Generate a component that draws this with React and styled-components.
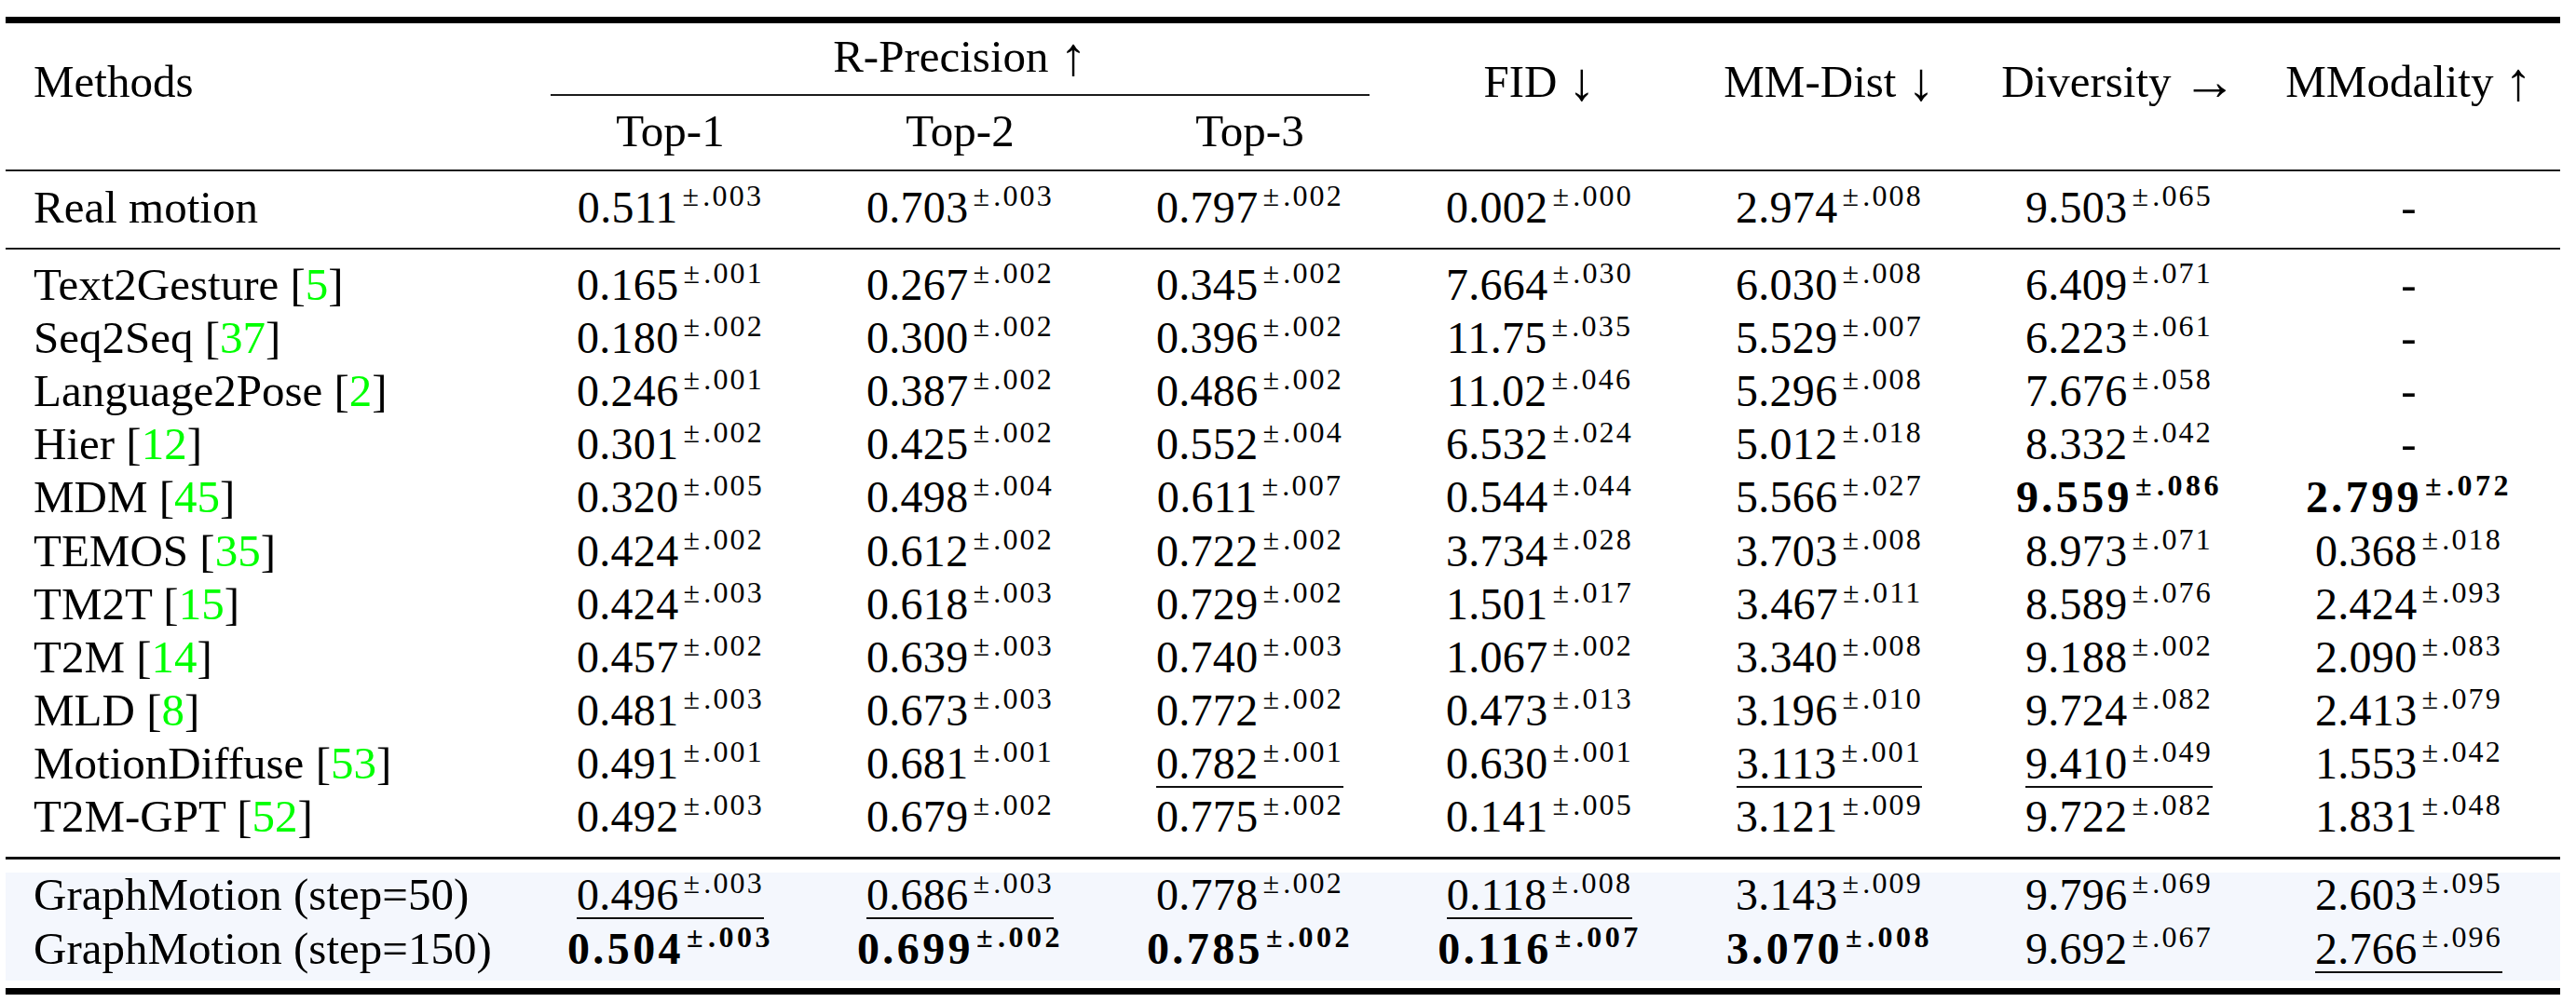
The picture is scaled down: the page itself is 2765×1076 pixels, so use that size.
import React from "react";
import styled, { createGlobalStyle } from "styled-components";

const COLS = "558px repeat(7, 311px)";

const rows = [
  { name: "Text2Gesture", cite: 5, vals: ["0.165/.001", "0.267/.002", "0.345/.002", "7.664/.030", "6.030/.008", "6.409/.071", "-"] },
  { name: "Seq2Seq", cite: 37, vals: ["0.180/.002", "0.300/.002", "0.396/.002", "11.75/.035", "5.529/.007", "6.223/.061", "-"] },
  { name: "Language2Pose", cite: 2, vals: ["0.246/.001", "0.387/.002", "0.486/.002", "11.02/.046", "5.296/.008", "7.676/.058", "-"] },
  { name: "Hier", cite: 12, vals: ["0.301/.002", "0.425/.002", "0.552/.004", "6.532/.024", "5.012/.018", "8.332/.042", "-"] },
  { name: "MDM", cite: 45, vals: ["0.320/.005", "0.498/.004", "0.611/.007", "0.544/.044", "5.566/.027", "*9.559/.086", "*2.799/.072"] },
  { name: "TEMOS", cite: 35, vals: ["0.424/.002", "0.612/.002", "0.722/.002", "3.734/.028", "3.703/.008", "8.973/.071", "0.368/.018"] },
  { name: "TM2T", cite: 15, vals: ["0.424/.003", "0.618/.003", "0.729/.002", "1.501/.017", "3.467/.011", "8.589/.076", "2.424/.093"] },
  { name: "T2M", cite: 14, vals: ["0.457/.002", "0.639/.003", "0.740/.003", "1.067/.002", "3.340/.008", "9.188/.002", "2.090/.083"] },
  { name: "MLD", cite: 8, vals: ["0.481/.003", "0.673/.003", "0.772/.002", "0.473/.013", "3.196/.010", "9.724/.082", "2.413/.079"] },
  { name: "MotionDiffuse", cite: 53, vals: ["0.491/.001", "0.681/.001", "_0.782/.001", "0.630/.001", "_3.113/.001", "_9.410/.049", "1.553/.042"] },
  { name: "T2M-GPT", cite: 52, vals: ["0.492/.003", "0.679/.002", "0.775/.002", "0.141/.005", "3.121/.009", "9.722/.082", "1.831/.048"] },
];

const realMotion = ["0.511/.003", "0.703/.003", "0.797/.002", "0.002/.000", "2.974/.008", "9.503/.065", "-"];

const ours = [
  { name: "GraphMotion (step=50)", vals: ["_0.496/.003", "_0.686/.003", "0.778/.002", "_0.118/.008", "3.143/.009", "9.796/.069", "2.603/.095"] },
  { name: "GraphMotion (step=150)", vals: ["*0.504/.003", "*0.699/.002", "*0.785/.002", "*0.116/.007", "*3.070/.008", "9.692/.067", "_2.766/.096"] },
];

const Value = ({ v }) => {
  if (v === "-") return <span>-</span>;
  const bold = v[0] === "*";
  const under = v[0] === "_";
  const [n, s] = v.replace(/^[*_]/, "").split("/");
  return (
    <Num $bold={bold} $under={under}>
      {n}
      <Pm $bold={bold}>
        <PmSign>±</PmSign>
        {s}
      </Pm>
    </Num>
  );
};

const Method = ({ name, cite }) => (
  <MethodCell>
    {name}
    {cite !== undefined && (
      <>
        {" "}[<Cite>{cite}</Cite>]
      </>
    )}
  </MethodCell>
);

const DataRow = ({ name, cite, vals, $tight }) => (
  <Row $tight={$tight}>
    <Method name={name} cite={cite} />
    {vals.map((v, i) => (
      <DataCell key={i}>
        <Value v={v} />
      </DataCell>
    ))}
  </Row>
);

export default function App() {
  return (
    <Page>
      <GlobalStyle />
      <Table>
        <Rule $h={7} />
        <Head>
          <HeadCell $col="1" $row="1 / 4" $top>
            Methods
          </HeadCell>
          <HeadCell $col="2 / 5" $row="1" $center>
            R-Precision <Arrow>↑</Arrow>
          </HeadCell>
          <CMidRule />
          <HeadCell $col="2" $row="3" $center>Top-1</HeadCell>
          <HeadCell $col="3" $row="3" $center>Top-2</HeadCell>
          <HeadCell $col="4" $row="3" $center>Top-3</HeadCell>
          <HeadCell $col="5" $row="1 / 4" $top $center>
            FID <Arrow>↓</Arrow>
          </HeadCell>
          <HeadCell $col="6" $row="1 / 4" $top $center>
            MM-Dist <Arrow>↓</Arrow>
          </HeadCell>
          <HeadCell $col="7" $row="1 / 4" $top $center>
            Diversity <Arrow>→</Arrow>
          </HeadCell>
          <HeadCell $col="8" $row="1 / 4" $top $center>
            MModality <Arrow>↑</Arrow>
          </HeadCell>
        </Head>
        <Rule $h={2} $color="#1b1b1b" />
        <RealSection>
          <DataRow name="Real motion" vals={realMotion} />
        </RealSection>
        <Rule $h={2} $color="#1b1b1b" />
        <Body>
          {rows.map((r) => (
            <DataRow key={r.name} {...r} />
          ))}
        </Body>
        <Rule $h={3} $color="#111" />
        <Highlight>
          {ours.map((r) => (
            <DataRow key={r.name} {...r} $tight />
          ))}
        </Highlight>
        <Rule $h={7} />
      </Table>
    </Page>
  );
}

// styles
const GlobalStyle = createGlobalStyle`
  html, body {
    margin: 0;
    padding: 0;
    background: #fff;
  }
  body {
    font-family: "Liberation Serif", "Times New Roman", serif;
    color: #000;
  }
`;

const Page = styled.div`
  padding: 18px 0 0 6px;
`;

const Table = styled.div`
  width: 2742px;
  font-size: 49px;
`;

const Rule = styled.div`
  height: ${(p) => p.$h}px;
  background: ${(p) => p.$color || "#000"};
`;

const Head = styled.div`
  display: grid;
  grid-template-columns: ${COLS};
  grid-template-rows: 57px auto 57px;
  padding: 7px 0 13px;
  line-height: 57px;
`;

const HeadCell = styled.div`
  grid-column: ${(p) => p.$col};
  grid-row: ${(p) => p.$row};
  text-align: ${(p) => (p.$center ? "center" : "left")};
  padding-left: ${(p) => (p.$center ? 0 : 30)}px;
  padding-top: ${(p) => (p.$top ? 27 : 0)}px;
  white-space: nowrap;
`;

const Arrow = styled.span`
  display: inline-block;
  font-size: 58px;
  line-height: 0;
  font-weight: 300;
  vertical-align: -3px;
`;

const CMidRule = styled.div`
  grid-column: 2 / 5;
  grid-row: 2;
  height: 2px;
  margin: 12px 27px 9px;
  background: #1b1b1b;
`;

const RealSection = styled.div`
  padding: 10px 0 15px;
`;

const Body = styled.div`
  padding: 9px 0 15px;
`;

const Highlight = styled.div`
  margin: 14px 0 8px;
  background: #f4f7fd;
`;

const Row = styled.div`
  display: grid;
  grid-template-columns: ${COLS};
  height: ${(p) => (p.$tight ? "58px" : "57.1px")};
  line-height: ${(p) => (p.$tight ? "48px" : "57.1px")};
`;

const MethodCell = styled.div`
  padding-left: 30px;
  white-space: nowrap;
`;

const Cite = styled.span`
  color: #00ff00;
`;

const DataCell = styled.div`
  text-align: center;
  white-space: nowrap;
`;

const Num = styled.span`
  display: inline-block;
  font-size: 48px;
  line-height: 1;
  font-weight: ${(p) => (p.$bold ? 700 : 400)};
  letter-spacing: ${(p) => (p.$bold ? "3.4px" : "0.3px")};
  border-bottom: 2px solid ${(p) => (p.$under ? "#111" : "transparent")};
`;

const Pm = styled.span`
  font-size: 32px;
  line-height: 0;
  vertical-align: 18px;
  margin-left: ${(p) => (p.$bold ? 2 : 4)}px;
  letter-spacing: ${(p) => (p.$bold ? "3.5px" : "2.2px")};
`;

const PmSign = styled.span`
  padding: 0 2px 0 1px;
`;
